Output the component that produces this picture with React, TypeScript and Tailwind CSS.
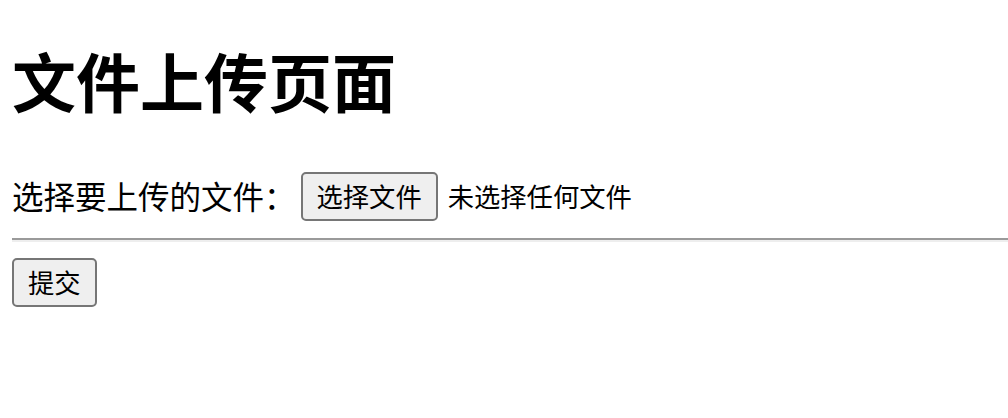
import React from 'react';

const font = '"Noto Sans CJK SC", "Noto Sans", sans-serif';

const App: React.FC = () => {
  return (
    <div className="min-h-screen bg-white pl-3 text-black" style={{ fontFamily: font }}>
      <h1 className="pt-[41px] text-[64px] leading-[76px] font-bold">文件上传页面</h1>

      <form className="mt-[55px]" onSubmit={e => e.preventDefault()}>
        <div className="flex items-center">
          <label className="pb-[4px] text-[31.5px] leading-[40px]">选择要上传的文件：</label>
          <button
            type="button"
            className="ml-[5px] rounded-[5px] border-2 border-[#767676] bg-[#efefef] px-[14px] pt-[6px] pb-[8px] text-[26.3px] leading-[31px]"
          >
            选择文件
          </button>
          <span className="ml-[10px] pb-[3px] text-[26.3px] leading-[31px]">未选择任何文件</span>
        </div>

        <hr className="mt-[17px] border-t-2 border-b-2 border-t-[#9a9a9a] border-b-[#eeeeee]" />

        <button
          type="submit"
          className="mt-[16px] rounded-[5px] border-2 border-[#767676] bg-[#efefef] px-[14px] pt-[6px] pb-[8px] text-[26.3px] leading-[31px]"
        >
          提交
        </button>
      </form>
    </div>
  );
};

export default App;
